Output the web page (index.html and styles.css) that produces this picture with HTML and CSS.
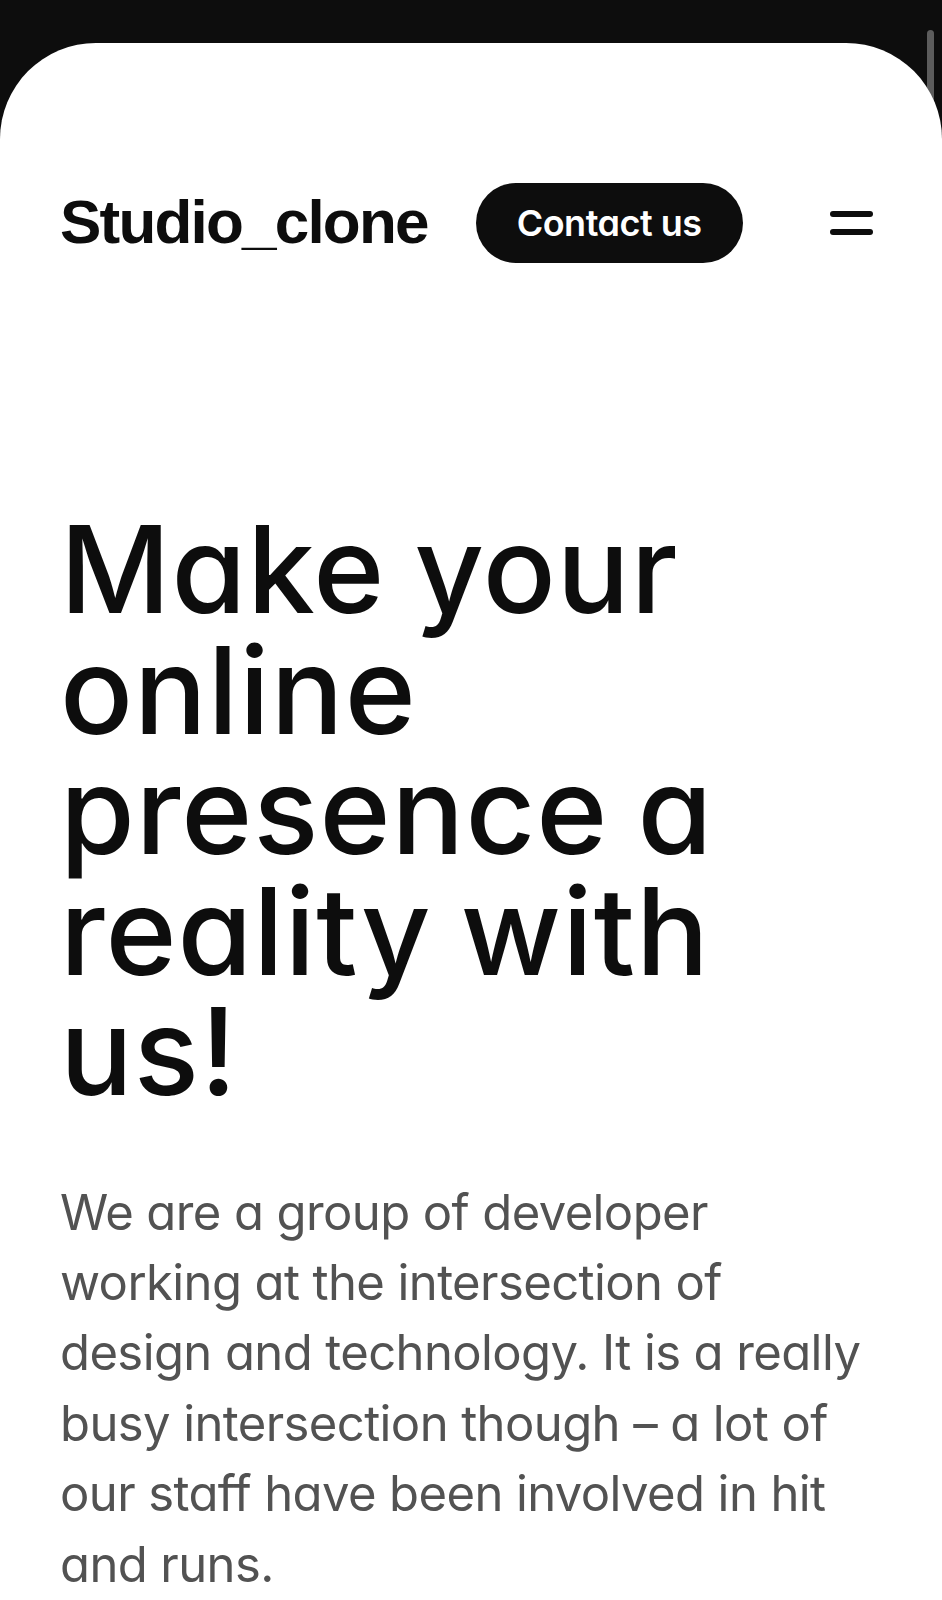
FILE: index.html
```html
<!DOCTYPE html>
<html lang="en">
<head>
<meta charset="utf-8">
<title>Studio_clone</title>
<link rel="stylesheet" href="styles.css">
</head>
<body>
<div class="scroll-thumb"></div>
<main class="card">
  <header class="topbar">
    <a class="logo" href="#">Studio_clone</a>
    <a class="contact" href="#">Contact us</a>
    <button class="menu" aria-label="Menu">
      <span class="bar"></span>
      <span class="bar"></span>
    </button>
  </header>
  <section class="hero">
    <h1 class="headline">Make your<br>online<br>presence a<br>reality with<br>us!</h1>
    <p class="intro">We are a group of developer<br>working at the intersection of<br>design and technology. It is a really<br>busy intersection though – a lot of<br>our staff have been involved in hit<br>and runs.</p>
  </section>
</main>
</body>
</html>
```
FILE: styles.css
```css
html, body {
  margin: 0;
  padding: 0;
}
body {
  background: #0d0d0d;
  min-height: 1600px;
  overflow: hidden;
}
.scroll-thumb {
  position: absolute;
  left: 927px;
  top: 30px;
  width: 7px;
  height: 110px;
  border-radius: 4px;
  background: #5c5c5c;
  z-index: 0;
}
.card {
  position: relative;
  z-index: 1;
  margin-top: 43px;
  min-height: 1557px;
  background: #ffffff;
  border-radius: 96px 96px 0 0;
  padding: 140px 69px 0 60px;
  box-sizing: border-box;
}
.topbar {
  display: flex;
  align-items: center;
  height: 80px;
}
.logo {
  font-family: "Liberation Sans", Arial, sans-serif;
  font-weight: 700;
  font-size: 62px;
  letter-spacing: -1.8px;
  color: #0d0d0d;
  text-decoration: none;
  margin-bottom: 4px;
}
.contact {
  margin-left: 48px;
  height: 80px;
  padding: 0 41px;
  border-radius: 40px;
  background: #0d0d0d;
  color: #ffffff;
  font-family: Inter, "Liberation Sans", sans-serif;
  font-feature-settings: "cv11";
  font-weight: 600;
  font-size: 36px;
  letter-spacing: -0.5px;
  text-decoration: none;
  display: flex;
  align-items: center;
}
.menu {
  margin-left: auto;
  border: 0;
  background: none;
  padding: 0;
  width: 43px;
  display: flex;
  flex-direction: column;
  gap: 12px;
  cursor: pointer;
}
.bar {
  display: block;
  width: 43px;
  height: 6px;
  border-radius: 3px;
  background: #0d0d0d;
}
.hero {
  padding-top: 246px;
}
.headline {
  margin: 0;
  font-family: Inter, "Liberation Sans", sans-serif;
  font-feature-settings: "cv11";
  font-weight: 500;
  font-size: 121px;
  line-height: 120.5px;
  letter-spacing: 1px;
  word-spacing: -4px;
  color: #0d0d0d;
  white-space: nowrap;
}
.intro {
  margin: 66px 0 0;
  font-family: Inter, "Liberation Sans", sans-serif;
  font-feature-settings: "cv11";
  font-weight: 400;
  font-size: 49px;
  line-height: 70.4px;
  letter-spacing: -0.6px;
  color: #525252;
  white-space: nowrap;
}
```
